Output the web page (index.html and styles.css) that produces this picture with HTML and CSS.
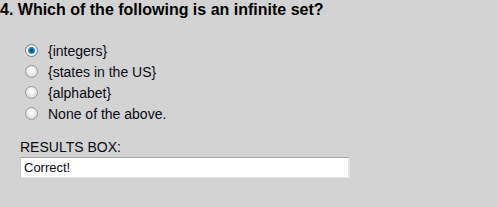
FILE: index.html
```html
<!DOCTYPE html>
<html>
<head>
<meta charset="utf-8">
<link rel="stylesheet" href="styles.css">
</head>
<body>
<div class="quiz">
  <h2 class="question">4. Which of the following is an infinite set?</h2>
  <div class="options">
    <label class="option"><span class="radio checked"></span>{integers}</label>
    <label class="option"><span class="radio"></span>{states in the US}</label>
    <label class="option"><span class="radio"></span>{alphabet}</label>
    <label class="option"><span class="radio"></span>None of the above.</label>
  </div>
  <div class="results">
    <div class="results-label">RESULTS BOX:</div>
    <div class="results-box">Correct!</div>
  </div>
</div>
</body>
</html>
```
FILE: styles.css
```css
html, body {
  margin: 0;
  padding: 0;
  background: #d3d3d3;
}
body {
  font-family: "Liberation Sans", Arial, sans-serif;
  color: #000;
}
.quiz {
  padding-top: 1px;
}
.question {
  margin: 0;
  font-size: 16px;
  font-weight: bold;
  line-height: 18px;
}
.options {
  display: flex;
  flex-direction: column;
  padding-left: 25px;
  margin-top: 21px;
}
.option {
  display: flex;
  align-items: center;
  height: 21px;
  font-size: 14px;
  color: #0a0a14;
}
.radio {
  width: 11px;
  height: 11px;
  border-radius: 50%;
  border: 1px solid #9a9a9a;
  background: radial-gradient(circle at 50% 40%, #ffffff 0%, #f2f2f2 35%, #d6d6d6 80%, #c4c4c4 100%);
  margin-right: 10px;
  flex: none;
}
.radio.checked {
  border-color: #7a7a7a;
  background: radial-gradient(circle at 50% 50%, #05355e 0%, #0f5f9c 20%, #2a96d6 38%, #5ab4e6 44%, #ffffff 52%, #f2f2f2 72%, #cfcfcf 100%);
}
.results {
  padding-left: 20px;
  margin-top: 15px;
}
.results-label {
  font-size: 14px;
  line-height: 16px;
  color: #0a0a14;
}
.results-box {
  width: 324px;
  height: 19px;
  margin-top: 2px;
  background: #fff;
  border-top: 1px solid #a6a6a6;
  border-left: 1px solid #c4c4c4;
  border-right: 2px solid #e4e4e4;
  border-bottom: 1px solid #e4e4e4;
  font-size: 13px;
  line-height: 19px;
  padding-left: 3px;
  color: #0a0a14;
}
```
